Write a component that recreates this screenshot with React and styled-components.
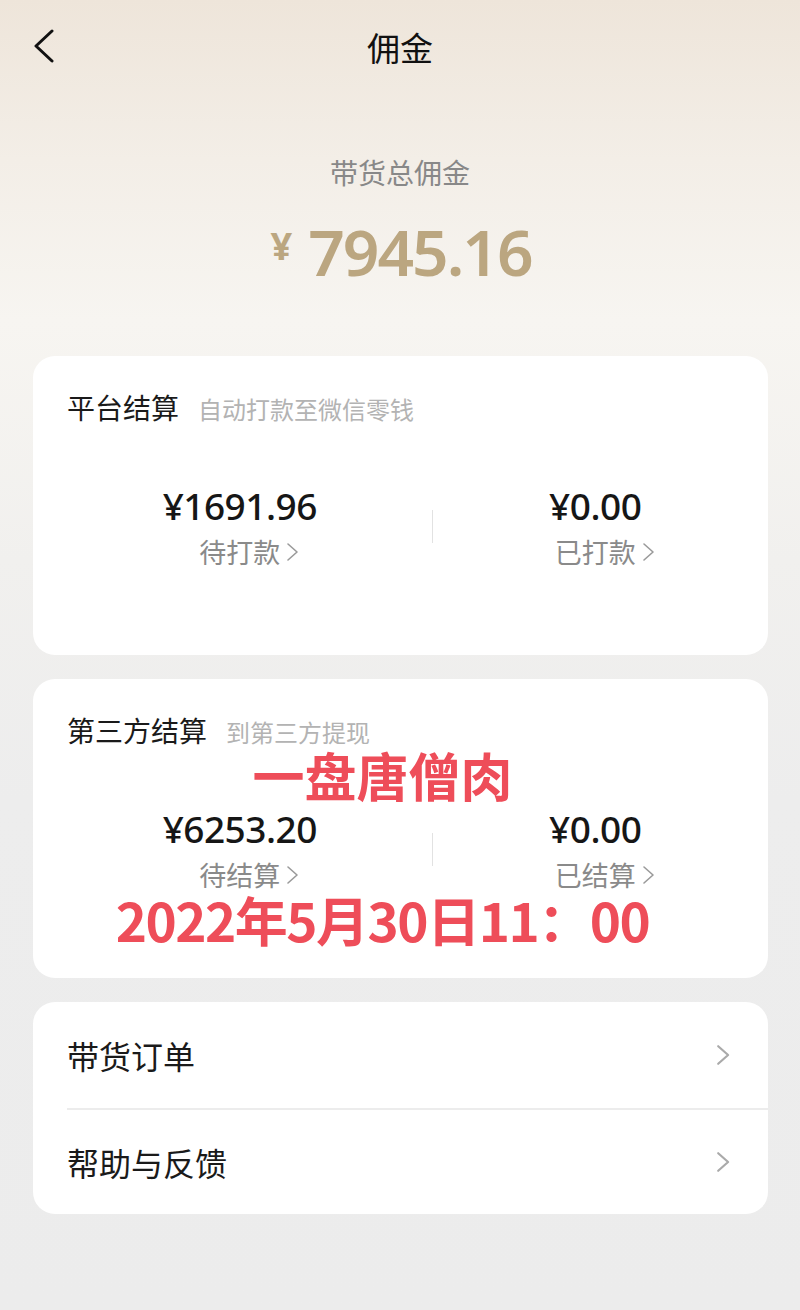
import React from "react";
import styled, { createGlobalStyle } from "styled-components";

const GlobalStyle = createGlobalStyle`
  html, body {
    margin: 0;
    padding: 0;
  }
  body {
    font-family: "Noto Sans CJK SC", "Noto Sans", sans-serif;
    background: #ececec;
  }
`;

const Chevron = ({ size = 14, color = "#aaa", width = 2 }) => (
  <svg width={size * 0.65} height={size} viewBox="0 0 13 20" fill="none">
    <path
      d="M2 2 L11 10 L2 18"
      stroke={color}
      strokeWidth={width}
      strokeLinecap="round"
      strokeLinejoin="round"
    />
  </svg>
);

const BackIcon = () => (
  <svg width="22" height="34" viewBox="0 0 22 34" fill="none">
    <path
      d="M19 2 L3 17 L19 32"
      stroke="#111"
      strokeWidth="3"
      strokeLinecap="round"
      strokeLinejoin="round"
    />
  </svg>
);

const Balance = ({ amount, label }) => (
  <BalanceItem>
    <Amount>¥{amount}</Amount>
    <BalanceLabel>
      {label}
      <LabelArrow>
        <Chevron size={20} color="#9a9a9a" width={1.6} />
      </LabelArrow>
    </BalanceLabel>
  </BalanceItem>
);

const App = () => {
  return (
    <Page>
      <GlobalStyle />
      <Header>
        <BackButton>
          <BackIcon />
        </BackButton>
        <Title>佣金</Title>
        <span />
      </Header>

      <Summary>
        <SummaryLabel>带货总佣金</SummaryLabel>
        <Total>
          <Yen>¥</Yen>7945.16
        </Total>
      </Summary>

      <Cards>
        <Card>
          <CardHead>
            <CardTitle>平台结算</CardTitle>
            <CardHint>自动打款至微信零钱</CardHint>
          </CardHead>
          <BalanceRow>
            <Balance amount="1691.96" label="待打款" />
            <VDivider />
            <Balance amount="0.00" label="已打款" />
          </BalanceRow>
        </Card>

        <Card>
          <CardHead>
            <CardTitle>第三方结算</CardTitle>
            <CardHint>到第三方提现</CardHint>
          </CardHead>
          <BalanceRow>
            <Balance amount="6253.20" label="待结算" />
            <VDivider />
            <Balance amount="0.00" label="已结算" />
          </BalanceRow>
          <Watermark top={70} size={52}>一盘唐僧肉</Watermark>
          <Watermark top={214} size={53} spacing={-1.5}>
            2022年5月30日11：00
          </Watermark>
        </Card>

        <ListCard>
          <ListRow>
            <ListText>带货订单</ListText>
            <Chevron size={22} color="#aaa" width={2} />
          </ListRow>
          <ListRow>
            <ListText>帮助与反馈</ListText>
            <Chevron size={22} color="#aaa" width={2} />
          </ListRow>
        </ListCard>
      </Cards>
    </Page>
  );
};

export default App;

const Page = styled.div`
  width: 800px;
  min-height: 1310px;
  background: linear-gradient(
    180deg,
    #eee5da 0px,
    #f3eee7 160px,
    #f7f5f1 320px,
    #f1f0ee 560px,
    #ededed 800px,
    #ececec 1310px
  );
  font-family: "Noto Sans CJK SC", "Noto Sans", sans-serif;
  overflow: hidden;
`;

const Header = styled.div`
  height: 94px;
  display: grid;
  grid-template-columns: 100px 1fr 100px;
  align-items: center;
`;

const BackButton = styled.div`
  display: flex;
  align-items: center;
  padding-left: 33px;
  padding-bottom: 2px;
`;

const Title = styled.div`
  text-align: center;
  font-size: 33px;
  color: #111;
  line-height: 40px;
`;

const Summary = styled.div`
  display: flex;
  flex-direction: column;
  align-items: center;
  padding-top: 59px;
`;

const SummaryLabel = styled.div`
  font-size: 28px;
  line-height: 38px;
  color: #888;
`;

const Total = styled.div`
  margin-top: 20px;
  height: 80px;
  display: flex;
  align-items: center;
  font-family: "Noto Sans", Roboto, sans-serif;
  font-size: 64px;
  font-weight: 600;
  letter-spacing: -2px;
  color: #bba680;
  padding-left: 2px;
`;

const Yen = styled.span`
  font-size: 38px;
  font-weight: 700;
  margin-right: 16px;
  margin-top: -12px;
  letter-spacing: 0;
`;

const Cards = styled.div`
  margin: 65px 32px 0 33px;
  display: flex;
  flex-direction: column;
  gap: 24px;
`;

const Card = styled.div`
  position: relative;
  height: 299px;
  box-sizing: border-box;
  background: #fff;
  border-radius: 22px;
  padding-top: 32px;
`;

const CardHead = styled.div`
  display: flex;
  align-items: baseline;
  gap: 19px;
  padding-left: 34px;
  line-height: 38px;
`;

const CardTitle = styled.div`
  font-size: 28px;
  color: #1a1a1a;
`;

const CardHint = styled.div`
  font-size: 24px;
  color: #b3b3b3;
`;

const BalanceRow = styled.div`
  margin: 56px 11px 0 14px;
  display: flex;
  justify-content: space-evenly;
  align-items: flex-start;
`;

const BalanceItem = styled.div`
  display: flex;
  flex-direction: column;
  align-items: center;
`;

const Amount = styled.div`
  font-family: "Noto Sans", Roboto, sans-serif;
  font-size: 37px;
  line-height: 44px;
  font-weight: 500;
  color: #161616;
  letter-spacing: -0.5px;
`;

const BalanceLabel = styled.div`
  margin-top: 6px;
  font-size: 27px;
  line-height: 36px;
  color: #8a8a8a;
  display: flex;
  align-items: center;
`;

const LabelArrow = styled.span`
  display: flex;
  margin-left: 6px;
  margin-right: -19px;
`;

const VDivider = styled.div`
  width: 1px;
  height: 33px;
  margin-top: 26px;
  background: #e2e2e2;
`;

const Watermark = styled.div`
  position: absolute;
  left: 0;
  right: 36px;
  top: ${(p) => p.top}px;
  text-align: center;
  font-size: ${(p) => p.size}px;
  letter-spacing: ${(p) => p.spacing || 0}px;
  line-height: 1;
  font-weight: 700;
  color: #ee4d59;
  white-space: nowrap;
  pointer-events: none;
`;

const ListCard = styled.div`
  background: #fff;
  border-radius: 22px;
  overflow: hidden;
`;

const ListRow = styled.div`
  height: 106px;
  box-sizing: border-box;
  margin-left: 34px;
  padding-right: 38px;
  display: flex;
  align-items: center;
  justify-content: space-between;
  & + & {
    border-top: 2px solid #ececec;
  }
`;

const ListText = styled.div`
  font-size: 32px;
  color: #1a1a1a;
`;
